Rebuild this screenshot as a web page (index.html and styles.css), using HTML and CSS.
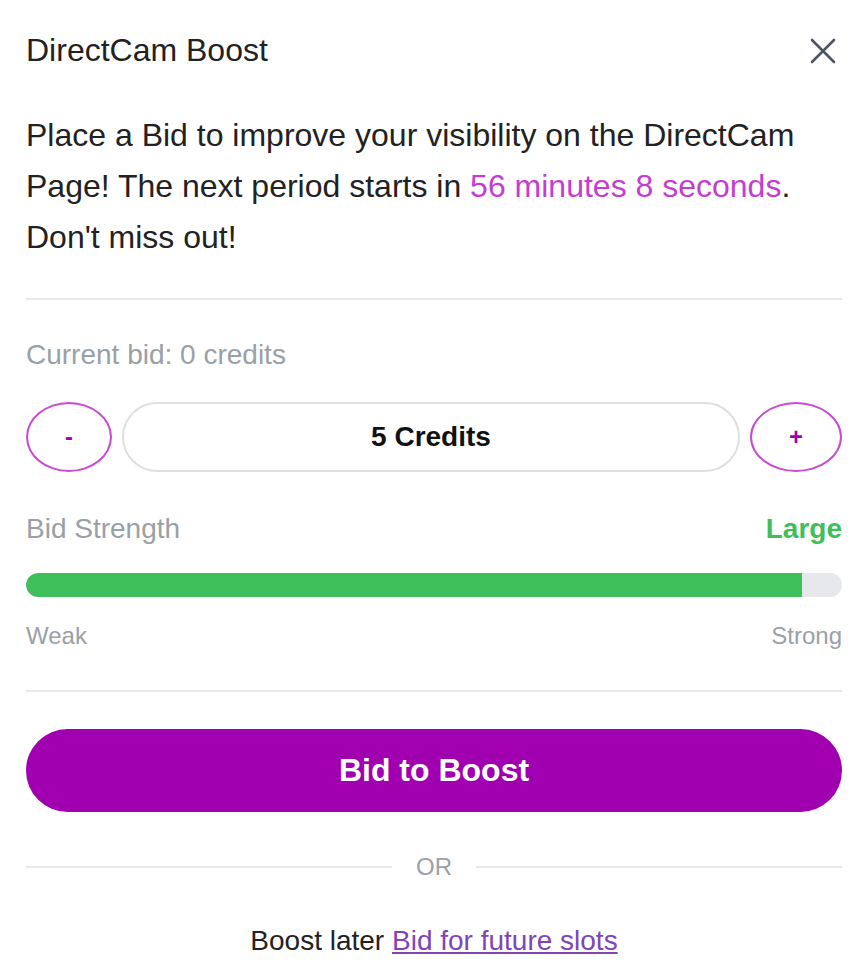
FILE: index.html
```html
<!DOCTYPE html>
<html lang="en">
<head>
<meta charset="utf-8">
<title>DirectCam Boost</title>
<link rel="stylesheet" href="styles.css">
</head>
<body>
<div class="modal">
  <div class="header">
    <h1 class="title">DirectCam Boost</h1>
    <button class="close" aria-label="Close">
      <svg width="26" height="26" viewBox="0 0 26 26"><path d="M2 2 L24 24 M24 2 L2 24" stroke="#4b5563" stroke-width="2.6" stroke-linecap="round" fill="none"/></svg>
    </button>
  </div>
  <p class="intro">Place a Bid to improve your visibility on the DirectCam Page! The next period starts in <span class="time">56 minutes 8 seconds</span>. Don't miss out!</p>
  <hr class="divider first">
  <div class="current">Current bid: 0 credits</div>
  <div class="stepper">
    <button class="step minus">-</button>
    <div class="amount">5 Credits</div>
    <button class="step plus">+</button>
  </div>
  <div class="strength-head">
    <span class="muted">Bid Strength</span>
    <span class="level">Large</span>
  </div>
  <div class="bar"><div class="fill" style="width:95.1%"></div></div>
  <div class="scale"><span>Weak</span><span>Strong</span></div>
  <hr class="divider second">
  <button class="cta">Bid to Boost</button>
  <div class="or"><span class="line"></span><span class="or-text">OR</span><span class="line"></span></div>
  <div class="later">Boost later <a href="#" class="link">Bid for future slots</a></div>
</div>
</body>
</html>
```
FILE: styles.css
```css
* { box-sizing: border-box; }
html, body { margin: 0; background: #fff; }
body { font-family: "Liberation Sans", Arial, sans-serif; color: #222; }
.modal { padding: 32px 26px 0 26px; display: flex; flex-direction: column; }
.header { display: flex; justify-content: space-between; align-items: center; height: 37px; }
.title { margin: 0; font-size: 32px; font-weight: 400; line-height: 37px; color: #222; }
.close { border: 0; background: none; padding: 0; width: 26px; height: 26px; margin-right: 6px; display: flex; }
.intro { margin: 41px 0 0 0; font-size: 32px; line-height: 51px; color: #222; }
.time { color: #c53dd0; }
.divider { border: 0; height: 2px; background: #e6e8ec; margin: 35px 0 0 0; width: 100%; }
.divider.second { margin-top: 36px; }
.current { margin-top: 34px; font-size: 28px; line-height: 42px; color: #9aa0a8; }
.stepper { margin-top: 26px; display: flex; gap: 10px; height: 70px; }
.step { height: 70px; border: 2px solid #c94ad3; border-radius: 50%; background: #fff; color: #a000b0; font-family: "Liberation Sans", Arial, sans-serif; font-weight: 700; font-size: 24px; padding: 0; }
.minus { width: 86px; }
.plus { width: 92px; }
.amount { flex: 1; border: 2px solid #dcdfe4; border-radius: 35px; display: flex; align-items: center; justify-content: center; font-size: 28px; font-weight: 700; color: #111; }
.strength-head { margin-top: 36px; display: flex; justify-content: space-between; line-height: 42px; font-size: 28px; }
.muted { color: #9aa0a8; }
.level { color: #3fbf5a; font-weight: 700; }
.bar { margin-top: 23px; height: 24px; border-radius: 12px; background: #e6e8ec; overflow: hidden; }
.fill { height: 100%; background: #3fbf5a; border-radius: 12px 0 0 12px; }
.scale { margin-top: 21px; display: flex; justify-content: space-between; font-size: 24px; line-height: 36px; color: #9aa0a8; }
.cta { margin-top: 37px; height: 83px; border: 0; border-radius: 42px; background: #a100b0; color: #fff; font-family: "Liberation Sans", Arial, sans-serif; font-size: 32px; font-weight: 700; width: 100%; }
.or { margin-top: 37px; display: flex; align-items: center; gap: 24px; line-height: 36px; }
.line { flex: 1; height: 2px; background: #e6e8ec; }
.or-text { font-size: 24px; color: #9aa0a8; }
.later { margin-top: 35px; text-align: center; font-size: 28px; line-height: 42px; color: #222; }
.link { color: #7f45b8; text-decoration: underline; }
```
